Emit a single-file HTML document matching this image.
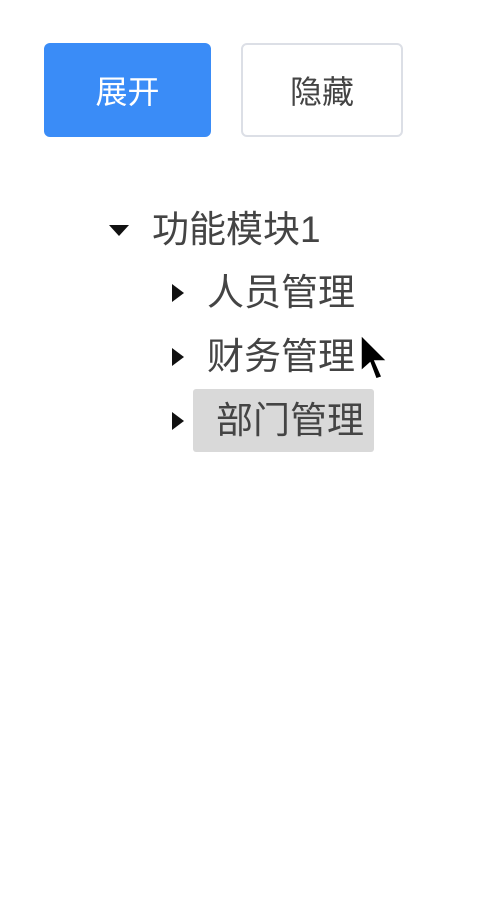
<!DOCTYPE html>
<html><head><meta charset="utf-8"><style>
html,body{margin:0;padding:0;background:#fff;width:480px;height:900px;overflow:hidden;}
body{font-family:"Liberation Sans","Noto Sans CJK SC",sans-serif;position:relative;}
.btn{position:absolute;top:43px;height:94px;box-sizing:border-box;border-radius:6px;font-size:32px;display:flex;align-items:center;justify-content:center;}
.b1{left:44px;width:167px;background:#3a8cf7;color:#fff;}
.b2{left:241px;width:162px;border:2px solid #dcdfe6;color:#444;background:#fff;}
.row{position:absolute;font-size:37px;color:#444;line-height:1;}
.tri{position:absolute;width:0;height:0;}
.down{border-left:10px solid transparent;border-right:10px solid transparent;border-top:11px solid #111;}
.right{border-top:9px solid transparent;border-bottom:9px solid transparent;border-left:12px solid #111;}
.hl{position:absolute;left:193px;top:389px;width:181px;height:63px;background:#d9d9d9;border-radius:3px;}
</style></head><body>
<div class="btn b1">展开</div>
<div class="btn b2">隐藏</div>
<div class="tri down" style="left:109px;top:225px"></div>
<div class="row" style="left:152px;top:211px">功能模块1</div>
<div class="tri right" style="left:172px;top:284px"></div>
<div class="row" style="left:207px;top:274px">人员管理</div>
<div class="tri right" style="left:172px;top:348px"></div>
<div class="row" style="left:207px;top:338px">财务管理</div>
<div class="hl"></div>
<div class="tri right" style="left:172px;top:412px"></div>
<div class="row" style="left:216px;top:402px">部门管理</div>
<svg style="position:absolute;left:358px;top:333px" width="34" height="54" viewBox="0 0 34 54">
<path d="M3 2 L3 38 L12 30 L18 46 L24 44 L17 28 L29 28 Z" fill="#000" stroke="#fff" stroke-width="1.5"/>
</svg>
</body></html>
